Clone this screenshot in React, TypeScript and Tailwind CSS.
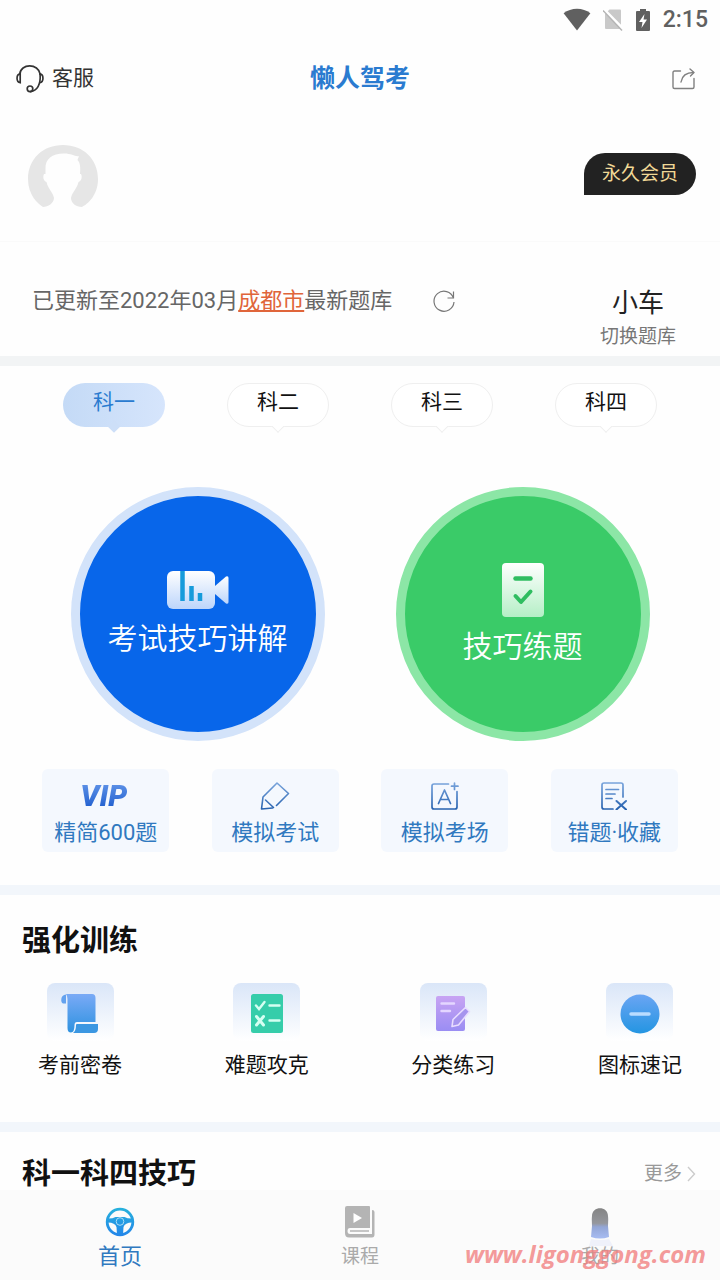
import type { ReactNode } from "react";

const subjects = ["科一", "科二", "科三", "科四"];

function WifiIcon() {
  return (
    <svg width="28" height="24" viewBox="0 0 28 24" fill="#606060">
      <path d="M14 22.500 L.6 5.200 C8 -.8 20 -.8 27.400 5.200 Z" />
    </svg>
  );
}

function NoSimIcon() {
  return (
    <svg width="20" height="24" viewBox="0 0 20 24">
      <path d="M6.500 1.500 H17 Q18 1.500 18 2.500 V21 H3 Q2 21 2 20 V6 Z" fill="#c9c9c9" />
      <path d="M1 1.500 L20 21" stroke="#fff" strokeWidth="3" />
      <path d="M0 2.500 L19 22.500" stroke="#b5b5b5" strokeWidth="1.500" />
    </svg>
  );
}

function BatteryIcon() {
  return (
    <svg width="16" height="24" viewBox="0 0 16 24">
      <path d="M5 1 H11 V3 H14 Q15 3 15 4 V22 Q15 23 14 23 H2 Q1 23 1 22 V4 Q1 3 2 3 H5 Z" fill="#606060" />
      <path d="M9.500 6 L4 14 H7.500 L6.500 20 L12 11.500 H8.500 Z" fill="#fff" />
    </svg>
  );
}

function HeadsetIcon() {
  return (
    <svg width="28" height="30" viewBox="0 0 30 30" fill="none" stroke="#333" strokeWidth="1.800" strokeLinecap="round">
      <path d="M4 10 C5 -2 24 -2 26 10" />
      <path d="M4.500 9.500 C0 10 0 18.500 4.500 19 Z" />
      <path d="M25.500 9.500 C30 10 30 18.500 25.500 19" />
      <path d="M25.800 9.500 C26.500 19 24 27 15.500 28.500" />
      <circle cx="15" cy="25.500" r="3" />
    </svg>
  );
}

function ShareIcon() {
  return (
    <svg width="24" height="22" viewBox="0 0 24 22" fill="none" stroke="#808080" strokeWidth="1.400" strokeLinecap="round" strokeLinejoin="round">
      <path d="M8.500 3 H2.500 Q1 3 1 4.500 V19 Q1 20.500 2.500 20.500 H20.500 Q22 20.500 22 19 V10.500" />
      <path d="M9 14 C10 8 14 4.500 21.500 4.500" />
      <path d="M18 1 L22 4.500 L18.500 8" />
    </svg>
  );
}

function Avatar() {
  return (
    <svg width="70" height="64" viewBox="0 0 70 64">
      <path
        d="M15 62 C10 59 0 50 0 34 C0 14 15 0 35 0 C55 0 70 14 70 34 C70 50 60 59 54 62 C48 62 43 58 43 53 C44 47 49 44 50.500 37 C53.500 36 54.500 32 53 29 L52 29 C52.500 23 52.500 18 49.500 15 L51 11 C47 12 44 8.500 36 8.500 C24 8.500 17 14 17.500 24 L17.500 29 L16 29 C14.500 32 15.500 36 18.500 37 C20 44 25 47 26 53 C26 58 20 62 15 62 Z"
        fill="#e6e6e6"
      />
    </svg>
  );
}

function RefreshIcon() {
  return (
    <svg width="24" height="24" viewBox="0 0 24 24" fill="none" stroke="#777" strokeWidth="1.200">
      <path d="M21.500 9 A10 10 0 1 0 22 13" />
      <path d="M21.500 2.500 V9 H15.500" />
    </svg>
  );
}

function VideoIcon() {
  return (
    <svg width="64" height="38" viewBox="0 0 64 38">
      <defs>
        <linearGradient id="video" x1="0" y1="0" x2="0" y2="1">
          <stop offset="0" stopColor="#fff" />
          <stop offset="1" stopColor="#bcd5fb" />
        </linearGradient>
      </defs>
      <rect x="1" y="0" width="48" height="38" rx="6" fill="url(#video)" />
      <path d="M49 15 L60 5.500 Q62.500 4.500 62.500 7 V31 Q62.500 33.500 60 32.500 L49 23 Z" fill="url(#video)" />
      <path d="M16.500 0 V30 M25.500 15 V30 M34 22 V30" stroke="#169bdb" strokeWidth="4.500" />
    </svg>
  );
}

function PaperIcon() {
  return (
    <svg width="42" height="54" viewBox="0 0 42 54">
      <defs>
        <linearGradient id="paper" x1="0" y1="0" x2="0" y2="1">
          <stop offset="0" stopColor="#fff" />
          <stop offset="1" stopColor="#b5efc6" />
        </linearGradient>
      </defs>
      <rect width="42" height="54" rx="4" fill="url(#paper)" />
      <g fill="none" stroke="#2fbd60" strokeWidth="4" strokeLinecap="round" strokeLinejoin="round">
        <path d="M13.500 15.500 H28.500" strokeWidth="4.500" />
        <path d="M13.500 33 L19 39 L28.500 28.500" />
      </g>
    </svg>
  );
}

function LineGradient({ id }: { id: string }) {
  return (
    <linearGradient id={id} x1="0" y1="0" x2="0" y2="28" gradientUnits="userSpaceOnUse">
      <stop offset="0" stopColor="#7ba6dd" />
      <stop offset="1" stopColor="#2460ae" />
    </linearGradient>
  );
}

function PencilIcon() {
  return (
    <svg width="30" height="28" viewBox="0 0 30 28" fill="none" stroke="url(#pencil)" strokeWidth="1.600" strokeLinejoin="round" strokeLinecap="round">
      <defs><LineGradient id="pencil" /></defs>
      <path d="M12.500 26 L1.500 27 L3 15 L17 1 L28.500 11.500 L16.500 23.500" />
      <path d="M5.500 18 L13.500 25.500" />
    </svg>
  );
}

function ExamRoomIcon() {
  return (
    <svg width="28" height="28" viewBox="0 0 28 28" fill="none" stroke="url(#room)" strokeWidth="1.700" strokeLinejoin="round" strokeLinecap="round">
      <defs><LineGradient id="room" /></defs>
      <path d="M17.500 2 H3 Q1 2 1 4 V25 Q1 27 3 27 H24 Q26 27 26 25 V9.500" />
      <path d="M7.500 21.500 L13.500 8 L19.500 21.500 M9.500 17.500 H17.500" />
      <path d="M23.500 1 V7.500 M20.500 4.200 H27" />
    </svg>
  );
}

function WrongListIcon() {
  return (
    <svg width="28" height="28" viewBox="0 0 28 28" fill="none" stroke="url(#wrong)" strokeWidth="1.700" strokeLinejoin="round" strokeLinecap="round">
      <defs><LineGradient id="wrong" /></defs>
      <path d="M13 27 H4 Q2 27 2 25 V3 Q2 1 4 1 H21 Q23 1 23 3 V15" />
      <path d="M6 7.500 H18.500 M6 12 H15 M6 16.500 H12" />
      <path d="M16.500 19 L26 27.500 M26 19 L16.500 27.500" strokeWidth="2" />
    </svg>
  );
}

function ScrollIcon() {
  return (
    <svg width="40" height="42" viewBox="0 0 40 42">
      <defs>
        <linearGradient id="scroll" x1="0" y1="0" x2="0" y2="1">
          <stop offset="0" stopColor="#7aaaf6" />
          <stop offset="1" stopColor="#2e92e0" />
        </linearGradient>
      </defs>
      <path d="M6 1.500 C0 1.500 .5 10.500 3 10.500 H6 Z" fill="#63a1ee" />
      <path d="M7 1 H32 Q35.500 1 35.500 5 V29 H17 Q14.500 29 14.500 32 Q14.500 39.500 11 39.500 Q7.500 39.500 7.500 35 V6 Q7.500 3 6 1 Z" fill="url(#scroll)" />
      <path d="M17 31 H38 V36 Q38 40 34 40 H13 Q16 38 16 32 Q16 31 17 31 Z" fill="#3b97e2" />
    </svg>
  );
}

function ChecklistIcon() {
  return (
    <svg width="40" height="42" viewBox="0 0 40 42">
      <rect x="4" y="1" width="32" height="39" rx="2.500" fill="#36cdaa" />
      <g fill="none" stroke="#d5fff2" strokeWidth="2.400" strokeLinecap="round">
        <path d="M9 12.500 L12 16 L17.500 9" />
        <path d="M22.500 12.500 H32.500 M22.500 27.500 H32.500" />
        <path d="M9.500 23.500 L16.500 32 M16.500 23.500 L9.500 32" strokeWidth="3" />
      </g>
    </svg>
  );
}

function NotebookIcon() {
  return (
    <svg width="40" height="42" viewBox="0 0 40 42">
      <defs>
        <linearGradient id="notebook" x1="0" y1="0" x2="0" y2="1">
          <stop offset="0" stopColor="#c8a4f3" />
          <stop offset="1" stopColor="#9a8df3" />
        </linearGradient>
      </defs>
      <rect x="3" y="3" width="29" height="35" rx="2" fill="url(#notebook)" />
      <path d="M8.500 10.500 H21 M8.500 18 H17" stroke="#e4d6ff" strokeWidth="2.400" strokeLinecap="round" />
      <path d="M32.500 14.500 L36.500 18.500 L25.500 32 L19 33.500 L20 26.500 Z" fill="#a694ee" stroke="#e9ddff" strokeWidth="1.600" strokeLinejoin="round" />
    </svg>
  );
}

function SignIcon() {
  return (
    <svg width="40" height="42" viewBox="0 0 40 42">
      <defs>
        <linearGradient id="sign" x1="0" y1="0" x2="0" y2="1">
          <stop offset="0" stopColor="#6aa5f3" />
          <stop offset="1" stopColor="#2495e2" />
        </linearGradient>
      </defs>
      <circle cx="20" cy="21" r="19.500" fill="url(#sign)" />
      <path d="M11 21 H29" stroke="#b9dcff" strokeWidth="3.500" strokeLinecap="round" />
    </svg>
  );
}

function WheelIcon() {
  return (
    <svg width="30" height="30" viewBox="0 0 30 30">
      <defs>
        <linearGradient id="wheel" x1="0" y1="0" x2="0" y2="30" gradientUnits="userSpaceOnUse">
          <stop offset="0" stopColor="#27b3dc" />
          <stop offset="1" stopColor="#2384ea" />
        </linearGradient>
      </defs>
      <circle cx="15" cy="15" r="12.800" fill="none" stroke="url(#wheel)" strokeWidth="2.800" />
      <path d="M3 11.500 Q8 11.500 10.500 10 H19.500 Q22 11.500 27 11.500 V15.500 Q20 15.500 18.500 20 L18 28 H12 L11.500 20 Q10 15.500 3 15.500 Z" fill="url(#wheel)" />
      <circle cx="15" cy="14.500" r="3.800" fill="none" stroke="#a9dcf6" strokeWidth="1" />
    </svg>
  );
}

function CourseIcon() {
  return (
    <svg width="30" height="32" viewBox="0 0 30 32">
      <path d="M2 0 H24 Q25 0 25 1 V22 H5 Q2.500 22 2.500 25 Q2.500 28 5 28 H27 V4 Q29.500 4 29.500 6 V28.500 Q29.500 31.500 27 31.500 H4 Q0 31.500 0 27 V2 Q0 0 2 0 Z" fill="#b4b4b4" />
      <path d="M5 25 H24" stroke="#b4b4b4" strokeWidth="1.500" />
      <path d="M8.500 7 L17 12 L8.500 17 Z" fill="#fff" />
    </svg>
  );
}

function MineIcon() {
  return (
    <svg width="40" height="40" viewBox="0 0 40 40">
      <defs>
        <linearGradient id="mine" x1="0" y1="0" x2="0" y2="1">
          <stop offset="0" stopColor="#848484" />
          <stop offset=".5" stopColor="#95979d" />
          <stop offset=".62" stopColor="#93a6d6" />
          <stop offset="1" stopColor="#a7bcf2" />
        </linearGradient>
      </defs>
      <path d="M12 10 C12 -.5 28 -.5 28 10 C28.500 14 28 17 28 20 L29 31 Q20 34 11 31 L12 20 C12 17 11.500 14 12 10 Z" fill="url(#mine)" />
      <path d="M11 33 Q20 35 29 33 L33 40 H9 Z" fill="#eff1fa" />
    </svg>
  );
}

function BigCircle({ icon, label, className }: { icon: ReactNode; label: string; className: string }) {
  return (
    <button className={`flex size-[254px] flex-col items-center justify-center gap-[10px] rounded-full border-[9px] pt-0.5 text-white ${className}`}>
      {icon}
      <span className="text-[30px] leading-10 font-[350]">{label}</span>
    </button>
  );
}

function Tile({ icon, label }: { icon: ReactNode; label: string }) {
  return (
    <button className="flex h-[83px] w-[127px] flex-col items-center gap-[5px] rounded-md bg-[#f4f8fe] pt-[13px]">
      <span className="flex h-7 items-center">{icon}</span>
      <span className="text-[22px] leading-9 whitespace-nowrap text-[#3079c0]">{label}</span>
    </button>
  );
}

function Training({ icon, label }: { icon: ReactNode; label: string }) {
  return (
    <button className="flex flex-col items-center gap-2">
      <span className="flex h-[58px] w-[67px] items-center justify-center rounded-lg bg-linear-to-b from-[#dae6f8] to-white pt-1">
        {icon}
      </span>
      <span className="text-[21px] leading-8 text-[#111]">{label}</span>
    </button>
  );
}

export default function App() {
  return (
    <div className="relative flex min-h-screen flex-col bg-[#fefefe] font-[Roboto,'Noto_Sans_CJK_SC',sans-serif]">
      <div className="flex h-10 items-center justify-end px-3">
        <div className="flex items-center gap-3">
          <WifiIcon />
          <NoSimIcon />
          <BatteryIcon />
          <span className="text-[23px] font-medium text-[#606060]">2:15</span>
        </div>
      </div>

      <header className="grid h-[76px] grid-cols-3 items-center px-4 pt-0.5">
        <button className="flex items-center gap-2 text-[21px] text-[#333]">
          <HeadsetIcon />
          客服
        </button>
        <h1 className="text-center text-[25px] font-bold text-[#2a7bd0]">懒人驾考</h1>
        <button className="justify-self-end pr-2" aria-label="分享">
          <ShareIcon />
        </button>
      </header>

      <section className="flex h-[126px] items-start justify-between border-b border-[#fafafa] px-6 pt-[29px]">
        <div className="pl-1">
          <Avatar />
        </div>
        <button className="mt-2 h-[42px] w-28 rounded-[21px] rounded-bl-none bg-[#222] text-[19px] text-[#f0d896]">
          永久会员
        </button>
      </section>

      <section className="flex items-start justify-between border-b-10 border-[#f2f4f5] pt-[43px] pr-11 pb-[3px] pl-8">
        <div className="flex items-center gap-10">
          <p className="text-[22px] leading-8 text-[#666]">
            已更新至2022年03月
            <a href="#city" className="text-[#e0653a] underline underline-offset-2">成都市</a>
            最新题库
          </p>
          <button aria-label="刷新">
            <RefreshIcon />
          </button>
        </div>
        <button className="flex flex-col items-center">
          <span className="text-[26px] leading-9 text-[#222]">小车</span>
          <span className="text-[19px] leading-8 text-[#777]">切换题库</span>
        </button>
      </section>

      <section className="border-b-10 border-[#f2f6fb] pt-[17px] pb-[33px]">
        <div className="grid grid-cols-4 justify-items-center px-8">
          {subjects.map((subject, i) => (
            <button
              key={subject}
              className={`relative h-11 w-[102px] rounded-full border pb-1 text-[21px] ${
                i === 0
                  ? "border-transparent bg-linear-to-r from-[#c4daf6] to-[#d6e5fc] bg-origin-border text-[#2a7bd0]"
                  : "border-[#efefef] bg-white text-[#111]"
              }`}
            >
              {subject}
              <span
                className={`absolute -bottom-[5px] left-1/2 size-[9px] -translate-x-1/2 rotate-45 border-r border-b ${
                  i === 0 ? "border-transparent bg-[#cddff8]" : "border-[#efefef] bg-white"
                }`}
              />
            </button>
          ))}
        </div>

        <div className="mt-[60px] grid grid-cols-2 justify-items-center px-[35px]">
          <BigCircle icon={<VideoIcon />} label="考试技巧讲解" className="border-[#d3e3fa] bg-[#0866ea]" />
          <BigCircle icon={<PaperIcon />} label="技巧练题" className="border-[#8ce6a6] bg-[#3acb68]" />
        </div>

        <div className="mt-7 grid grid-cols-4 justify-items-center px-[21px]">
          <Tile
            icon={
              <span className="bg-linear-to-b from-[#6a9cec] to-[#0c51c8] bg-clip-text pr-1 text-[30px] leading-9 font-black text-transparent italic">
                VIP
              </span>
            }
            label="精简600题"
          />
          <Tile icon={<PencilIcon />} label="模拟考试" />
          <Tile icon={<ExamRoomIcon />} label="模拟考场" />
          <Tile icon={<WrongListIcon />} label="错题·收藏" />
        </div>
      </section>

      <section className="border-b-10 border-[#f2f6fb] pt-7 pb-[41px]">
        <h2 className="px-[22px] text-[29px] leading-9 font-bold text-[#111]">强化训练</h2>
        <div className="mt-6 flex justify-between px-[38px]">
          <Training icon={<ScrollIcon />} label="考前密卷" />
          <Training icon={<ChecklistIcon />} label="难题攻克" />
          <Training icon={<NotebookIcon />} label="分类练习" />
          <Training icon={<SignIcon />} label="图标速记" />
        </div>
      </section>

      <section className="flex items-center justify-between pt-[26px] pr-6 pl-[22px]">
        <h2 className="text-[29px] leading-8 font-bold text-[#111]">科一科四技巧</h2>
        <a href="#more" className="flex items-center gap-1 text-[19px] text-[#999]">
          更多
          <svg width="10" height="16" viewBox="0 0 10 16" fill="none" stroke="#ccc" strokeWidth="1.400">
            <path d="M2 1 L8.500 8 L2 15" />
          </svg>
        </a>
      </section>

      <nav className="sticky bottom-0 mt-auto grid h-[90px] grid-cols-3 bg-[#fbfbfb] pt-4">
        <a href="#home" className="flex flex-col items-center gap-[3px]">
          <span className="flex h-8 items-center"><WheelIcon /></span>
          <span className="text-[22px] leading-8 text-[#3079c0]">首页</span>
        </a>
        <a href="#course" className="flex flex-col items-center gap-[3px]">
          <span className="flex h-8 items-center"><CourseIcon /></span>
          <span className="text-[19px] leading-8 text-[#aaa]">课程</span>
        </a>
        <a href="#mine" className="flex flex-col items-center gap-[3px]">
          <span className="flex h-8 items-start"><MineIcon /></span>
          <span className="text-[19px] leading-8 text-[#aaa]">我的</span>
        </a>
        <span className="absolute right-[14px] bottom-2 font-['Open_Sans',sans-serif] text-[24px] leading-9 font-bold text-[#f27f7f]/80 italic">
          www.ligonggong.com
        </span>
      </nav>
    </div>
  );
}
